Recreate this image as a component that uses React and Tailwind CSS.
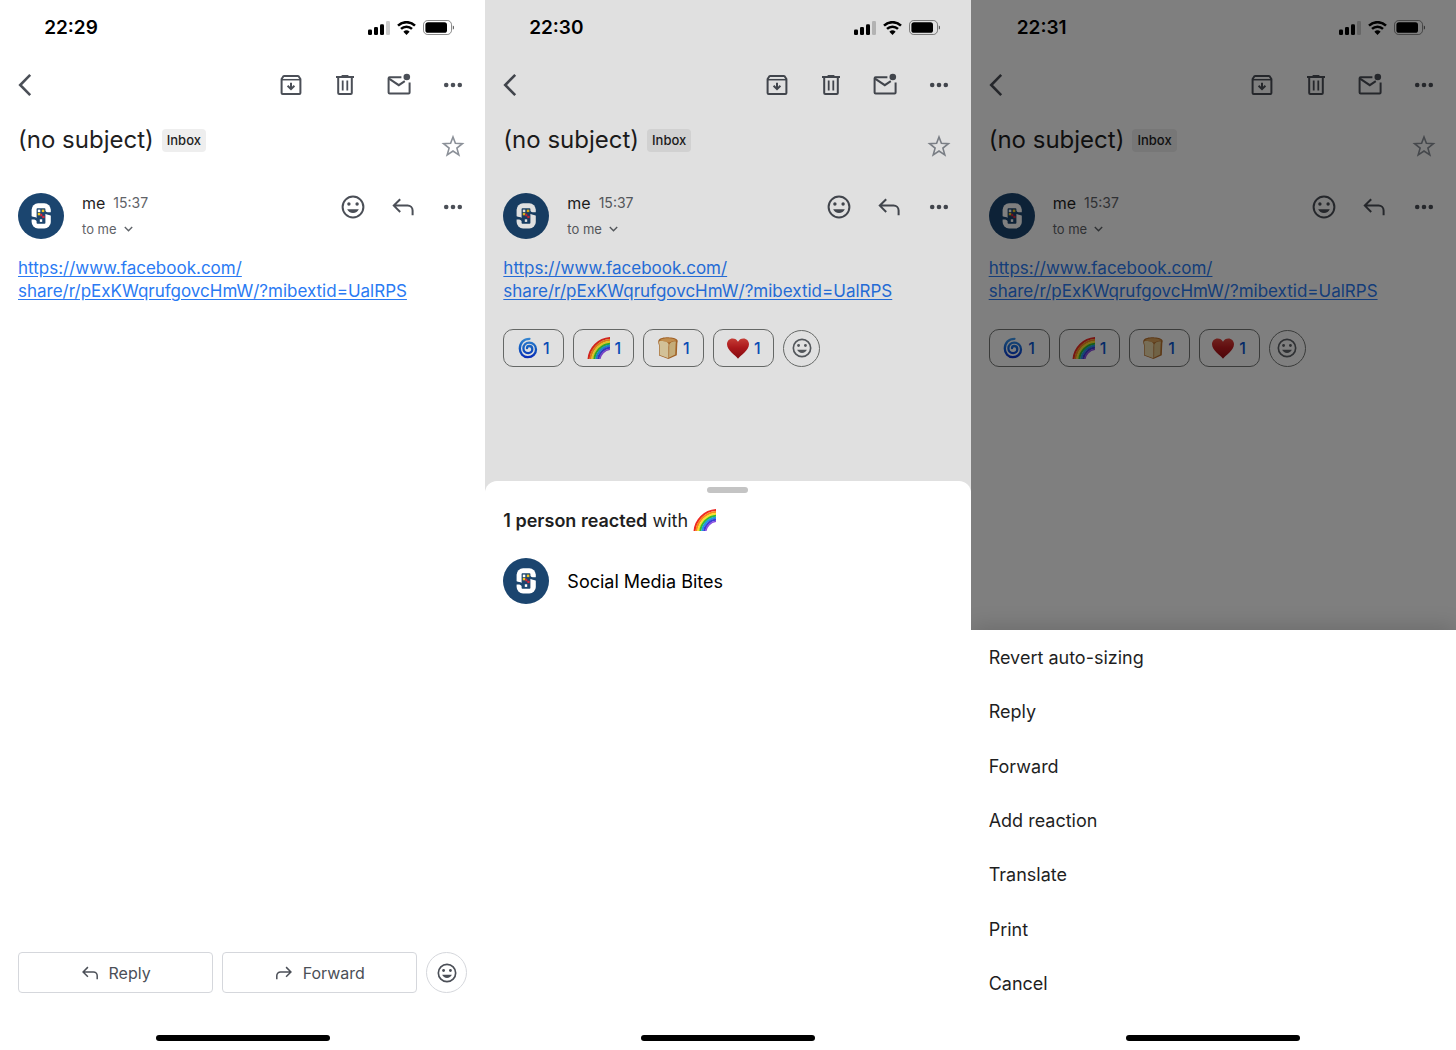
import { useId } from "react";

const menuItems = [
  "Revert auto-sizing",
  "Reply",
  "Forward",
  "Add reaction",
  "Translate",
  "Print",
  "Cancel",
];

function StatusBar({ time }) {
  return (
    <div className="flex h-[55px] items-center justify-between pr-[31px]">
      <span className="w-[142px] pt-0.5 text-center text-[19px] font-semibold text-black">
        {time}
      </span>

      <div className="flex items-center gap-[7px] text-black">
        <svg width="22" height="14" viewBox="0 0 22 14" fill="currentColor">
          <rect x="0" y="8.6" width="4" height="5.4" rx="1.3" />
          <rect x="6" y="6" width="4" height="8" rx="1.3" />
          <rect x="12" y="3.3" width="4" height="10.7" rx="1.3" />
          <rect x="18" y="0" width="4" height="14" rx="1.3" opacity="0.2" />
        </svg>
        <svg width="19" height="14" viewBox="0 0 19 14" fill="none" stroke="currentColor">
          <path d="M1 4.6a12.2 12.2 0 0 1 17 0" strokeWidth="2.5" />
          <path d="M4 7.9a8 8 0 0 1 11 0" strokeWidth="2.5" />
          <path d="M9.5 14 6.4 10.8a4.5 4.5 0 0 1 6.2 0Z" fill="currentColor" stroke="none" />
        </svg>
        <svg width="31" height="15" viewBox="0 0 31 15">
          <rect x="0.5" y="0.5" width="28" height="14" rx="4.2" fill="none" stroke="#000" strokeOpacity="0.45" />
          <rect x="2.4" y="2.2" width="21.6" height="10.6" rx="2.6" />
          <path d="M29.8 5.4v4.2a2.3 2.3 0 0 0 0-4.2Z" fillOpacity="0.6" />
        </svg>
      </div>
    </div>
  );
}

function IconButton({ label, children }) {
  return (
    <button type="button" aria-label={label} className="flex size-6 items-center justify-center">
      {children}
    </button>
  );
}

function Icon({ children, className = "size-6" }) {
  return (
    <svg
      className={`shrink-0 ${className}`}
      viewBox="0 0 24 24"
      fill="none"
      stroke="currentColor"
      strokeWidth="2"
    >
      {children}
    </svg>
  );
}

function ArchiveIcon() {
  return (
    <Icon>
      <path d="M2.6 6 4.4 3.300Q4.700 3 5.200 3h13.600q.5 0 .8.300L21.400 6v14a1 1 0 0 1-1 1H3.600a1 1 0 0 1-1-1Z" strokeLinejoin="round" />
      <path d="M3 6.700h18" strokeWidth="1.500" />
      <path d="M12 9.700v6.500M8.600 12.800l3.400 3.400 3.400-3.400" />
    </Icon>
  );
}

function TrashIcon() {
  return (
    <Icon>
      <path d="M3 3.900h18M8.600 2.900h6.800" />
      <path d="M5.200 4.500V20a1 1 0 0 0 1 1h11.600a1 1 0 0 0 1-1V4.500" />
      <path d="M9.700 7.500v10M14.300 7.500v10" strokeWidth="1.800" />
    </Icon>
  );
}

function UnreadIcon() {
  return (
    <Icon>
      <path d="M14.400 4.200H2.600a1 1 0 0 0-1 1v14.200a1 1 0 0 0 1 1h19a1 1 0 0 0 1-1V9.400" />
      <path d="m2 5.600 9.800 6.600 6-4" />
      <circle cx="19.800" cy="4" r="3.300" fill="currentColor" stroke="none" />
    </Icon>
  );
}

function MoreIcon() {
  return (
    <Icon>
      <g fill="currentColor" stroke="none">
        <circle cx="5.2" cy="12" r="2.3" />
        <circle cx="12" cy="12" r="2.3" />
        <circle cx="18.8" cy="12" r="2.3" />
      </g>
    </Icon>
  );
}

function SmileIcon({ className }) {
  return (
    <Icon className={className}>
      <circle cx="12" cy="12" r="10.4" />
      <g fill="currentColor" stroke="none">
        <circle cx="7.9" cy="9" r="1.7" />
        <circle cx="16.1" cy="9" r="1.7" />
        <path d="M6.2 14.2h11.6c-.9 2.300-3.200 3.800-5.800 3.800s-4.900-1.500-5.800-3.800Z" />
      </g>
    </Icon>
  );
}

function ReplyIcon({ className }) {
  return (
    <Icon className={className}>
      <path d="M9.2 4.2 2.8 10.6l6.4 6.4M3 10.6h13.6a5 5 0 0 1 5 5v4.6" />
    </Icon>
  );
}

function ForwardIcon({ className }) {
  return (
    <Icon className={className}>
      <path d="m14.8 4.2 6.4 6.4-6.4 6.4M21 10.6H7.4a5 5 0 0 0-5 5v4.6" />
    </Icon>
  );
}

function Avatar() {
  return (
    <svg className="size-[46px] shrink-0" viewBox="0 0 46 46" role="img" aria-label="Social Media Bites logo">
      <circle cx="23" cy="23" r="23" fill="#1b456f" />
      <rect x="13.6" y="10.3" width="19.2" height="25.2" rx="6.5" fill="#fff" />
      <g fill="#1b456f">
        <path d="M27 17.5c1.500 2.300 4 2 7 1.500v4c-3-1.200-5.500-1.200-7-2.200Z" />
        <path d="M19 28.300c-1.500-2.300-4-2-7-1.500v-4c3 1.200 5.500 1.200 7 2.200Z" />
        <rect x="18.6" y="15.2" width="8.8" height="15.6" rx="0.8" />
      </g>
      <rect x="19.8" y="16.6" width="2.5" height="2.5" fill="#fff" />
      <rect x="23.8" y="16.6" width="2.5" height="2.5" fill="#f3c623" />
      <rect x="19.8" y="19.8" width="2.5" height="2.5" fill="#f3c623" />
      <rect x="22.3" y="20.8" width="2" height="2.5" fill="#d9263a" />
      <rect x="24.3" y="22.800" width="2.3" height="2.3" fill="#d9263a" />
      <rect x="21.8" y="26.3" width="2.4" height="2.6" fill="#fff" />
    </svg>
  );
}

function Cyclone() {
  const id = useId();
  return (
    <svg className="h-[22px] w-5" viewBox="0 0 20 22" fill="none" role="img" aria-label="Cyclone">
      <defs>
        <linearGradient id={id} x1="0" y1="0" x2="0" y2="22" gradientUnits="userSpaceOnUse">
          <stop offset="0" stopColor="#45a0f0" />
          <stop offset="0.5" stopColor="#1468dc" />
          <stop offset="1" stopColor="#0a2bd0" />
        </linearGradient>
      </defs>
      <path
        d="M11.5 1.8C5.5 1.8 1.8 6 1.8 11.6c0 5 3.4 8.6 8 8.6 4.8 0 8.2-3.4 8.2-7.8 0-4-3-6.8-6.8-6.8-3.4 0-5.8 2.4-5.8 5.600 0 2.800 2 4.900 4.700 4.900 2.500 0 4.200-1.700 4.200-3.900 0-1.900-1.300-3.200-3-3.200-1.400 0-2.300 1-2.300 2.200"
        stroke={`url(#${id})`}
        strokeWidth="2.3"
        strokeLinecap="round"
      />
    </svg>
  );
}

function Rainbow() {
  return (
    <svg className="h-[22px] w-[23px]" viewBox="0 0 23 22" fill="none" strokeWidth="2.1" role="img" aria-label="Rainbow">
      <circle cx="24.5" cy="24" r="23" stroke="#ee2a24" />
      <circle cx="24.5" cy="24" r="21.1" stroke="#f98a1c" />
      <circle cx="24.5" cy="24" r="19.2" stroke="#fbe02c" />
      <circle cx="24.5" cy="24" r="17.3" stroke="#35bf2d" />
      <circle cx="24.5" cy="24" r="15.4" stroke="#1f9be0" />
      <circle cx="24.5" cy="24" r="13.5" stroke="#3b3fd8" />
      <circle cx="24.5" cy="24" r="11.9" stroke="#8a4be0" strokeWidth="1.6" />
    </svg>
  );
}

function Bread() {
  return (
    <svg className="h-[22px] w-5" viewBox="0 0 20 22" role="img" aria-label="Bread">
      <path d="M.4 3.400C2 .8 7 .2 11.500.4c4.500.2 8 1.200 8.200 3.400.1 1.200-.4 1.800-.4 3l-.5 11.400L10.400 22 1 18.400V8C.4 6.400 0 4.600.4 3.400Z" fill="#b8702c" />
      <path d="M1.800 3.400C4.400 1.400 9 1.100 13 1.500c2 .3 4.400.8 5.400 1.900-2.800.3-5.200 1.100-7.400 2.100C8 4.600 5 4 1.800 3.400Z" fill="#dca25a" />
      <path d="M1 5.200c0-1.400 1.400-1.500 3.600-1.100 3 .5 5.800 1.200 6 3.400.1 1-.2 1.600-.2 2.600v11.200L1.600 18V8.200c0-1-.6-2-.6-3Z" fill="#efdcae" />
      <path d="M11.200 7.800c.4-2 3-3.300 6.400-3.500.6 1.300 0 2.200 0 3.400l-.4 9.800-6.100 3Z" fill="#e0c48a" />
    </svg>
  );
}

function Heart() {
  const id = useId();
  return (
    <svg className="h-[21px] w-[22px]" viewBox="0 0 22 21" role="img" aria-label="Heart">
      <defs>
        <linearGradient id={id} x1="0" y1="0" x2="0" y2="21" gradientUnits="userSpaceOnUse">
          <stop offset="0" stopColor="#e2473f" />
          <stop offset="0.45" stopColor="#c41d20" />
          <stop offset="1" stopColor="#960c13" />
        </linearGradient>
      </defs>
      <path
        d="M11 20.8C9 17.2 0 12.8 0 6.2 0 2.6 2.6.4 5.6.4 8 .4 10 1.6 11 3.8 12 1.6 14 .4 16.4.4c3 0 5.600 2.200 5.600 5.800 0 6.600-9 11-11 14.600Z"
        fill={`url(#${id})`}
      />
    </svg>
  );
}

const reactions = [
  { name: "cyclone", Emoji: Cyclone },
  { name: "rainbow", Emoji: Rainbow },
  { name: "bread", Emoji: Bread },
  { name: "heart", Emoji: Heart },
];

function Message({ time, showReactions }) {
  return (
    <>
      <StatusBar time={time} />

      <div className="flex h-[60px] items-center gap-[30px] px-5 text-[#4b4f57]">
        <button type="button" aria-label="Back" className="-ml-1 mr-auto">
          <svg className="size-6" viewBox="0 0 24 24" fill="none" stroke="currentColor" strokeWidth="2.6">
            <path d="M14.2 1.800 4.200 12l10 10.200" />
          </svg>
        </button>
        <IconButton label="Archive"><ArchiveIcon /></IconButton>
        <IconButton label="Delete"><TrashIcon /></IconButton>
        <IconButton label="Mark as unread"><UnreadIcon /></IconButton>
        <IconButton label="More"><MoreIcon /></IconButton>
      </div>

      <div className="flex items-start px-5">
        <div className="-ml-0.5 flex h-[50px] items-center gap-2">
          <h1 className="text-[24px] text-[#1f1f1f]">(no subject)</h1>
          <span className="rounded bg-[#eeeeee] px-[5px] text-[13px] font-medium leading-[23px] text-[#1f1f1f]">
            Inbox
          </span>
        </div>
        <div className="ml-auto flex h-[62px] items-center text-[#8b9098]">
          <IconButton label="Star">
            <Icon>
              <path
                d="m12 3 2.4 6.3 7 .4-5.500 4.400 1.900 6.700-5.800-3.800-5.800 3.800 1.900-6.700L2.600 9.700l7-.4Z"
                strokeWidth="1.6"
              />
            </Icon>
          </IconButton>
        </div>
      </div>

      <div className="mt-[13px] flex items-start px-5">
        <div className="-ml-0.5 flex items-center gap-[18px]">
          <Avatar />
          <div className="leading-[26px] text-[#5f6368]">
            <div className="flex gap-2 text-[14px]">
              <span className="text-[16px] text-[#1f1f1f]">me</span>
              <span>15:37</span>
            </div>
            <button type="button" className="flex items-center gap-[7px] text-[13px]">
              to me
              <svg className="h-[6px] w-[9px]" viewBox="0 0 9 6" fill="none" stroke="currentColor" strokeWidth="1.4">
                <path d="m.8 1 3.7 3.7L8.2 1" />
              </svg>
            </button>
          </div>
        </div>
        <div className="ml-auto flex h-[34px] items-center gap-[26px] text-[#4b4f57]">
          <IconButton label="Add reaction"><SmileIcon /></IconButton>
          <IconButton label="Reply"><ReplyIcon /></IconButton>
          <IconButton label="Message options"><MoreIcon /></IconButton>
        </div>
      </div>

      <p className="mt-[15px] px-[18px] text-[17px] leading-[23px]">
        <a href="#message" className="text-[#2a7af3] underline underline-offset-2">
          https://www.facebook.com/
          <br />
          share/r/pExKWqrufgovcHmW/?mibextid=UalRPS
        </a>
      </p>

      {showReactions && (
        <div className="mt-[26px] flex items-center gap-[9px] px-[18px]">
          {reactions.map(({ name, Emoji }) => (
            <button
              key={name}
              type="button"
              className="flex h-[38px] w-[61px] items-center justify-center gap-[5px] rounded-[10px] border border-[#747775] text-[16px] font-medium text-[#0b57d0]"
            >
              <Emoji />
              1
            </button>
          ))}
          <button
            type="button"
            aria-label="Add reaction"
            className="flex size-[37px] items-center justify-center rounded-full border border-[#747775] text-[#5f6368]"
          >
            <SmileIcon className="size-5" />
          </button>
        </div>
      )}
    </>
  );
}

function HomeBar() {
  return <div className="mx-auto mb-[9px] mt-auto h-[6px] w-[174px] shrink-0 rounded-full bg-black" />;
}

export default function App() {
  return (
    <main className="grid min-h-screen grid-cols-3 bg-white font-['Inter',sans-serif]">
      <section className="flex flex-col overflow-hidden">
        <Message time="22:29" />

        <div className="mt-auto flex gap-[9px] px-[18px] pb-[42px] text-[16px] text-[#4b4f57]">
          <button
            type="button"
            className="flex h-[41px] flex-1 items-center justify-center gap-2.5 rounded border border-[#d5d7dc]"
          >
            <ReplyIcon className="size-[18px]" />
            Reply
          </button>
          <button
            type="button"
            className="flex h-[41px] flex-1 items-center justify-center gap-2.5 rounded border border-[#d5d7dc]"
          >
            <ForwardIcon className="size-[18px]" />
            Forward
          </button>
          <button
            type="button"
            aria-label="Add reaction"
            className="flex size-[41px] items-center justify-center rounded-full border border-[#d5d7dc]"
          >
            <SmileIcon className="size-5" />
          </button>
        </div>
        <div className="flex">
          <HomeBar />
        </div>
      </section>

      <section className="relative overflow-hidden">
        <Message time="22:30" showReactions />
        <div className="absolute inset-0 bg-black/12" />

        <div className="absolute inset-x-0 bottom-0 flex h-[569px] flex-col rounded-t-xl bg-white px-[18px]">
          <div className="mx-auto mt-[6px] h-[6px] w-[41px] shrink-0 rounded-full bg-[#c4c4c4]" />
          <h2 className="mt-3 flex h-[30px] items-center text-[18px] text-[#1f1f1f]">
            <span className="whitespace-pre"><b className="font-semibold">1 person reacted</b> with </span>
            <Rainbow />
          </h2>
          <div className="mt-[23px] flex items-center gap-[18px]">
            <Avatar />
            <span className="text-[18px] text-black">Social Media Bites</span>
          </div>
          <HomeBar />
        </div>
      </section>

      <section className="relative overflow-hidden">
        <Message time="22:31" showReactions />
        <div className="absolute inset-0 bg-black/50" />

        <div className="absolute inset-x-0 bottom-0 flex h-[420px] flex-col bg-white shadow-[0_-4px_20px_rgba(0,0,0,0.15)]">
          <div className="grid h-[381px] grid-rows-7">
            {menuItems.map((item) => (
              <button
                key={item}
                type="button"
                className="px-[18px] text-left text-[18px] text-[#1f1f1f]"
              >
                {item}
              </button>
            ))}
          </div>
          <HomeBar />
        </div>
      </section>
    </main>
  );
}
